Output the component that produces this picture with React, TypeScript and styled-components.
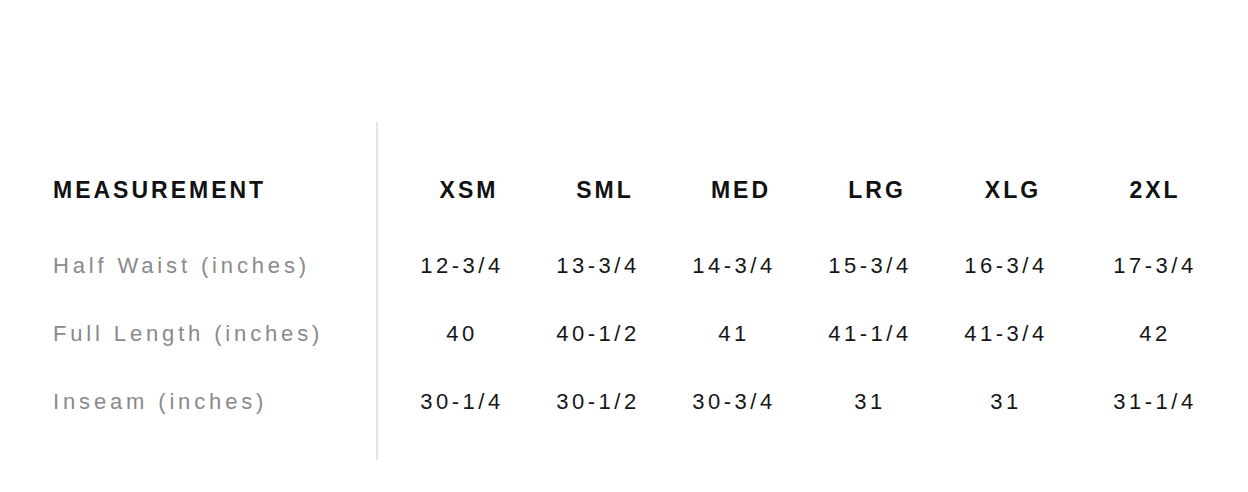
import React from "react";
import styled, { createGlobalStyle } from "styled-components";

const GlobalStyle = createGlobalStyle`
  html, body {
    margin: 0;
    padding: 0;
    background: #ffffff;
  }
  body {
    font-family: "Liberation Sans", Arial, sans-serif;
  }
`;

const sizes = ["XSM", "SML", "MED", "LRG", "XLG", "2XL"];

const rows = [
  { label: "Half Waist (inches)", values: ["12-3/4", "13-3/4", "14-3/4", "15-3/4", "16-3/4", "17-3/4"] },
  { label: "Full Length (inches)", values: ["40", "40-1/2", "41", "41-1/4", "41-3/4", "42"] },
  { label: "Inseam (inches)", values: ["30-1/4", "30-1/2", "30-3/4", "31", "31", "31-1/4"] },
];

export default function App() {
  return (
    <>
      <GlobalStyle />
      <Page>
        <Chart>
          <Labels>
            <HeadCell $align="left">MEASUREMENT</HeadCell>
            {rows.map((r) => (
              <LabelCell key={r.label}>{r.label}</LabelCell>
            ))}
          </Labels>
          <Sizes>
            {sizes.map((s, i) => (
              <HeadCell key={s} $align="center" $shift={i < 5 ? 14 : 0}>
                {s}
              </HeadCell>
            ))}
            {rows.map((r) =>
              r.values.map((v, i) => <ValueCell key={r.label + i}>{v}</ValueCell>)
            )}
          </Sizes>
        </Chart>
      </Page>
    </>
  );
}

const Page = styled.div`
  width: 1248px;
  height: 492px;
  padding-top: 122px;
  box-sizing: border-box;
  background: #fff;
`;

const Chart = styled.div`
  display: flex;
  align-items: stretch;
`;

const Labels = styled.div`
  box-sizing: border-box;
  width: 378px;
  padding: 34px 0 24px 53px;
  border-right: 2px solid #e4e4e4;
  display: grid;
  grid-template-rows: 76px 68px 68px 68px;
  align-items: start;
`;

const Sizes = styled.div`
  padding: 34px 0 24px 16px;
  display: grid;
  grid-template-columns: repeat(5, 136px) 162px;
  grid-template-rows: 76px 68px 68px 68px;
  align-items: start;
`;

const HeadCell = styled.div<{ $align: string; $shift?: number }>`
  height: 68px;
  line-height: 68px;
  font-size: 23px;
  font-weight: 700;
  letter-spacing: 3px;
  color: #111111;
  text-align: ${(p) => p.$align};
  padding-left: ${(p) => p.$shift || 0}px;
  white-space: nowrap;
`;

const LabelCell = styled.div`
  height: 68px;
  line-height: 68px;
  font-size: 22px;
  letter-spacing: 3.85px;
  color: #8a8a8a;
  white-space: nowrap;
`;

const ValueCell = styled.div`
  height: 68px;
  line-height: 68px;
  font-size: 22px;
  letter-spacing: 3.5px;
  color: #161616;
  text-align: center;
  white-space: nowrap;
`;
